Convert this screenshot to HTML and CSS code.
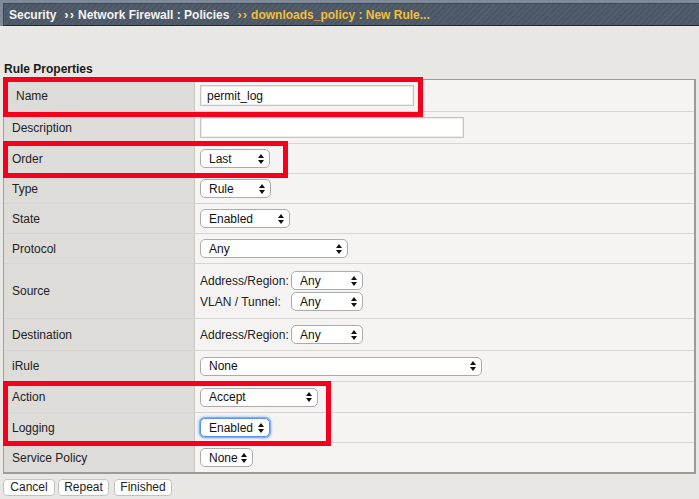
FILE: index.html
```html
<!DOCTYPE html>
<html>
<head>
<meta charset="utf-8">
<title>New Rule</title>
<link rel="stylesheet" href="styles.css">
</head>
<body>
<div class="header">
  <div class="bar">
    <span class="crumb">Security</span>
    <span class="sep">››</span>
    <span class="crumb">Network Firewall : Policies</span>
    <span class="sep cur">››</span>
    <span class="crumb cur">downloads_policy : New Rule...</span>
  </div>
</div>

<div class="content">
  <div class="title">Rule Properties</div>
  <div class="table">
    <div class="row h32">
      <div class="label label-focus">Name</div>
      <div class="value"><div class="input w214">permit_log</div></div>
    </div>
    <div class="row h32">
      <div class="label">Description</div>
      <div class="value"><div class="input w264"></div></div>
    </div>
    <div class="row h30">
      <div class="label">Order</div>
      <div class="value"><div class="sel w70"><span>Last</span><svg class="arr" width="6" height="10" viewBox="0 0 6 10"><path d="M0 4 L3 0 L6 4 Z M0 6 L3 10 L6 6 Z"/></svg></div></div>
    </div>
    <div class="row h30">
      <div class="label">Type</div>
      <div class="value"><div class="sel w71"><span>Rule</span><svg class="arr" width="6" height="10" viewBox="0 0 6 10"><path d="M0 4 L3 0 L6 4 Z M0 6 L3 10 L6 6 Z"/></svg></div></div>
    </div>
    <div class="row h30">
      <div class="label">State</div>
      <div class="value"><div class="sel w90"><span>Enabled</span><svg class="arr" width="6" height="10" viewBox="0 0 6 10"><path d="M0 4 L3 0 L6 4 Z M0 6 L3 10 L6 6 Z"/></svg></div></div>
    </div>
    <div class="row h30">
      <div class="label">Protocol</div>
      <div class="value"><div class="sel w148"><span>Any</span><svg class="arr" width="6" height="10" viewBox="0 0 6 10"><path d="M0 4 L3 0 L6 4 Z M0 6 L3 10 L6 6 Z"/></svg></div></div>
    </div>
    <div class="row h55">
      <div class="label">Source</div>
      <div class="value">
        <div class="pairs">
          <span class="plabel">Address/Region:</span>
          <div class="sel w72"><span>Any</span><svg class="arr" width="6" height="10" viewBox="0 0 6 10"><path d="M0 4 L3 0 L6 4 Z M0 6 L3 10 L6 6 Z"/></svg></div>
          <span class="plabel">VLAN / Tunnel:</span>
          <div class="sel w72"><span>Any</span><svg class="arr" width="6" height="10" viewBox="0 0 6 10"><path d="M0 4 L3 0 L6 4 Z M0 6 L3 10 L6 6 Z"/></svg></div>
        </div>
      </div>
    </div>
    <div class="row h32">
      <div class="label">Destination</div>
      <div class="value">
        <div class="pairs">
          <span class="plabel">Address/Region:</span>
          <div class="sel w72"><span>Any</span><svg class="arr" width="6" height="10" viewBox="0 0 6 10"><path d="M0 4 L3 0 L6 4 Z M0 6 L3 10 L6 6 Z"/></svg></div>
        </div>
      </div>
    </div>
    <div class="row h31">
      <div class="label">iRule</div>
      <div class="value"><div class="sel w282"><span>None</span><svg class="arr" width="6" height="10" viewBox="0 0 6 10"><path d="M0 4 L3 0 L6 4 Z M0 6 L3 10 L6 6 Z"/></svg></div></div>
    </div>
    <div class="row h31">
      <div class="label">Action</div>
      <div class="value"><div class="sel w118"><span>Accept</span><svg class="arr" width="6" height="10" viewBox="0 0 6 10"><path d="M0 4 L3 0 L6 4 Z M0 6 L3 10 L6 6 Z"/></svg></div></div>
    </div>
    <div class="row h30">
      <div class="label">Logging</div>
      <div class="value"><div class="sel w70 focus"><span>Enabled</span><svg class="arr" width="6" height="10" viewBox="0 0 6 10"><path d="M0 4 L3 0 L6 4 Z M0 6 L3 10 L6 6 Z"/></svg></div></div>
    </div>
    <div class="row h29 last">
      <div class="label">Service Policy</div>
      <div class="value"><div class="sel w53"><span>None</span><svg class="arr" width="6" height="10" viewBox="0 0 6 10"><path d="M0 4 L3 0 L6 4 Z M0 6 L3 10 L6 6 Z"/></svg></div></div>
    </div>
  </div>
  <div class="buttons">
    <button class="btn btn-cancel">Cancel</button>
    <button class="btn btn-repeat">Repeat</button>
    <button class="btn btn-finished">Finished</button>
  </div>
</div>

<div class="mark mark-name"></div>
<div class="mark mark-order"></div>
<div class="mark mark-action"></div>
</body>
</html>
```

FILE: styles.css
```css
* { box-sizing: border-box; }
html, body { margin: 0; padding: 0; }
body {
  background: #e9e7e3;
  font-family: "Liberation Sans", Arial, Helvetica, sans-serif;
  font-size: 12px;
  color: #222;
  width: 699px;
  height: 499px;
  overflow: hidden;
  position: relative;
}

.header {
  height: 26px;
  background: #7f8a98;
  padding-top: 3px;
  padding-left: 3px;
}
.bar {
  height: 23px;
  border-top: 1px solid #3f4753;
  border-left: 1px solid #3f4753;
  border-bottom: 1px solid #22272d;
  background: repeating-linear-gradient(135deg, #4c5765 0px, #4c5765 2px, #535e6c 2px, #535e6c 4px);
  display: flex;
  align-items: center;
  padding-left: 5px;
  font-weight: bold;
  color: #f4f4f4;
  white-space: nowrap;
}
.sep {
  font-size: 13px;
  letter-spacing: 1px;
  margin: 0 3px 0 8px;
}
.cur { color: #f2bf3c; }

.content {
  padding-left: 3px;
}
.title {
  font-weight: bold;
  color: #1a1a1a;
  line-height: 14px;
  margin-top: 36px;
  padding-left: 1px;
  margin-bottom: 3px;
}

.table {
  width: 693px;
  border-top: 1px solid #9e9c9b;
  border-left: 1px solid #a3a1a0;
  border-right: 2px solid #9c9a99;
  border-bottom: 2px solid #9c9a99;
  background: #f5f4f2;
}
.row {
  display: flex;
  border-bottom: 1px solid #d7d5d1;
}
.row.last { border-bottom: none; }
.h29 { height: 29px; }
.h30 { height: 30px; }
.h31 { height: 31px; }
.h32 { height: 32px; }
.h55 { height: 55px; }

.label {
  width: 191px;
  flex: none;
  background: #dedcd8;
  border-right: 1px solid #c9c7c3;
  display: flex;
  align-items: center;
  padding-left: 8px;
  color: #222;
}
.label-focus {
  border-left: 4px solid #3a74c6;
}
.value {
  flex: 1;
  display: flex;
  align-items: center;
  padding-left: 5px;
}

.input {
  height: 21px;
  background: #fff;
  border: 1px solid #c4c4c4;
  box-shadow: inset 0 0 0 1px #ececec;
  padding-left: 6px;
  display: flex;
  align-items: center;
  color: #111;
}
.w214 { width: 214px; }
.w264 { width: 264px; }

.sel {
  height: 19px;
  background: #fff;
  border: 1px solid #ababab;
  border-radius: 5px;
  display: flex;
  align-items: center;
  justify-content: space-between;
  padding: 0 5px 0 8px;
  color: #111;
}
.sel.focus {
  border-color: #5b95e6;
  box-shadow: 0 0 0 1px #7fb0f0, 0 0 2px 2px rgba(120, 170, 240, 0.45);
}
.arr { fill: #111; flex: none; }
.w53 { width: 53px; }
.w70 { width: 70px; }
.w71 { width: 71px; }
.w72 { width: 72px; }
.w90 { width: 90px; }
.w118 { width: 118px; }
.w148 { width: 148px; }
.w282 { width: 282px; }

.pairs {
  display: grid;
  grid-template-columns: 91px auto;
  row-gap: 2px;
  align-items: center;
}
.plabel { color: #222; }

.buttons {
  display: flex;
  margin-top: 5px;
}
.btn {
  height: 17px;
  font-family: "Liberation Sans", Arial, sans-serif;
  font-size: 12px;
  color: #222;
  background: #fff;
  border: 1px solid #c2c2c2;
  border-radius: 4px;
  padding: 0;
  line-height: 15px;
}
.btn-cancel { width: 52px; }
.btn-repeat { width: 51px; margin-left: 3px; }
.btn-finished { width: 58px; margin-left: 5px; }

.mark {
  position: absolute;
  border: 5px solid #f4001d;
}
.mark-name { left: 3px; top: 77px; width: 420px; height: 40px; }
.mark-order { left: 3px; top: 141px; width: 285px; height: 37px; }
.mark-action { left: 3px; top: 381px; width: 328px; height: 65px; }
```
